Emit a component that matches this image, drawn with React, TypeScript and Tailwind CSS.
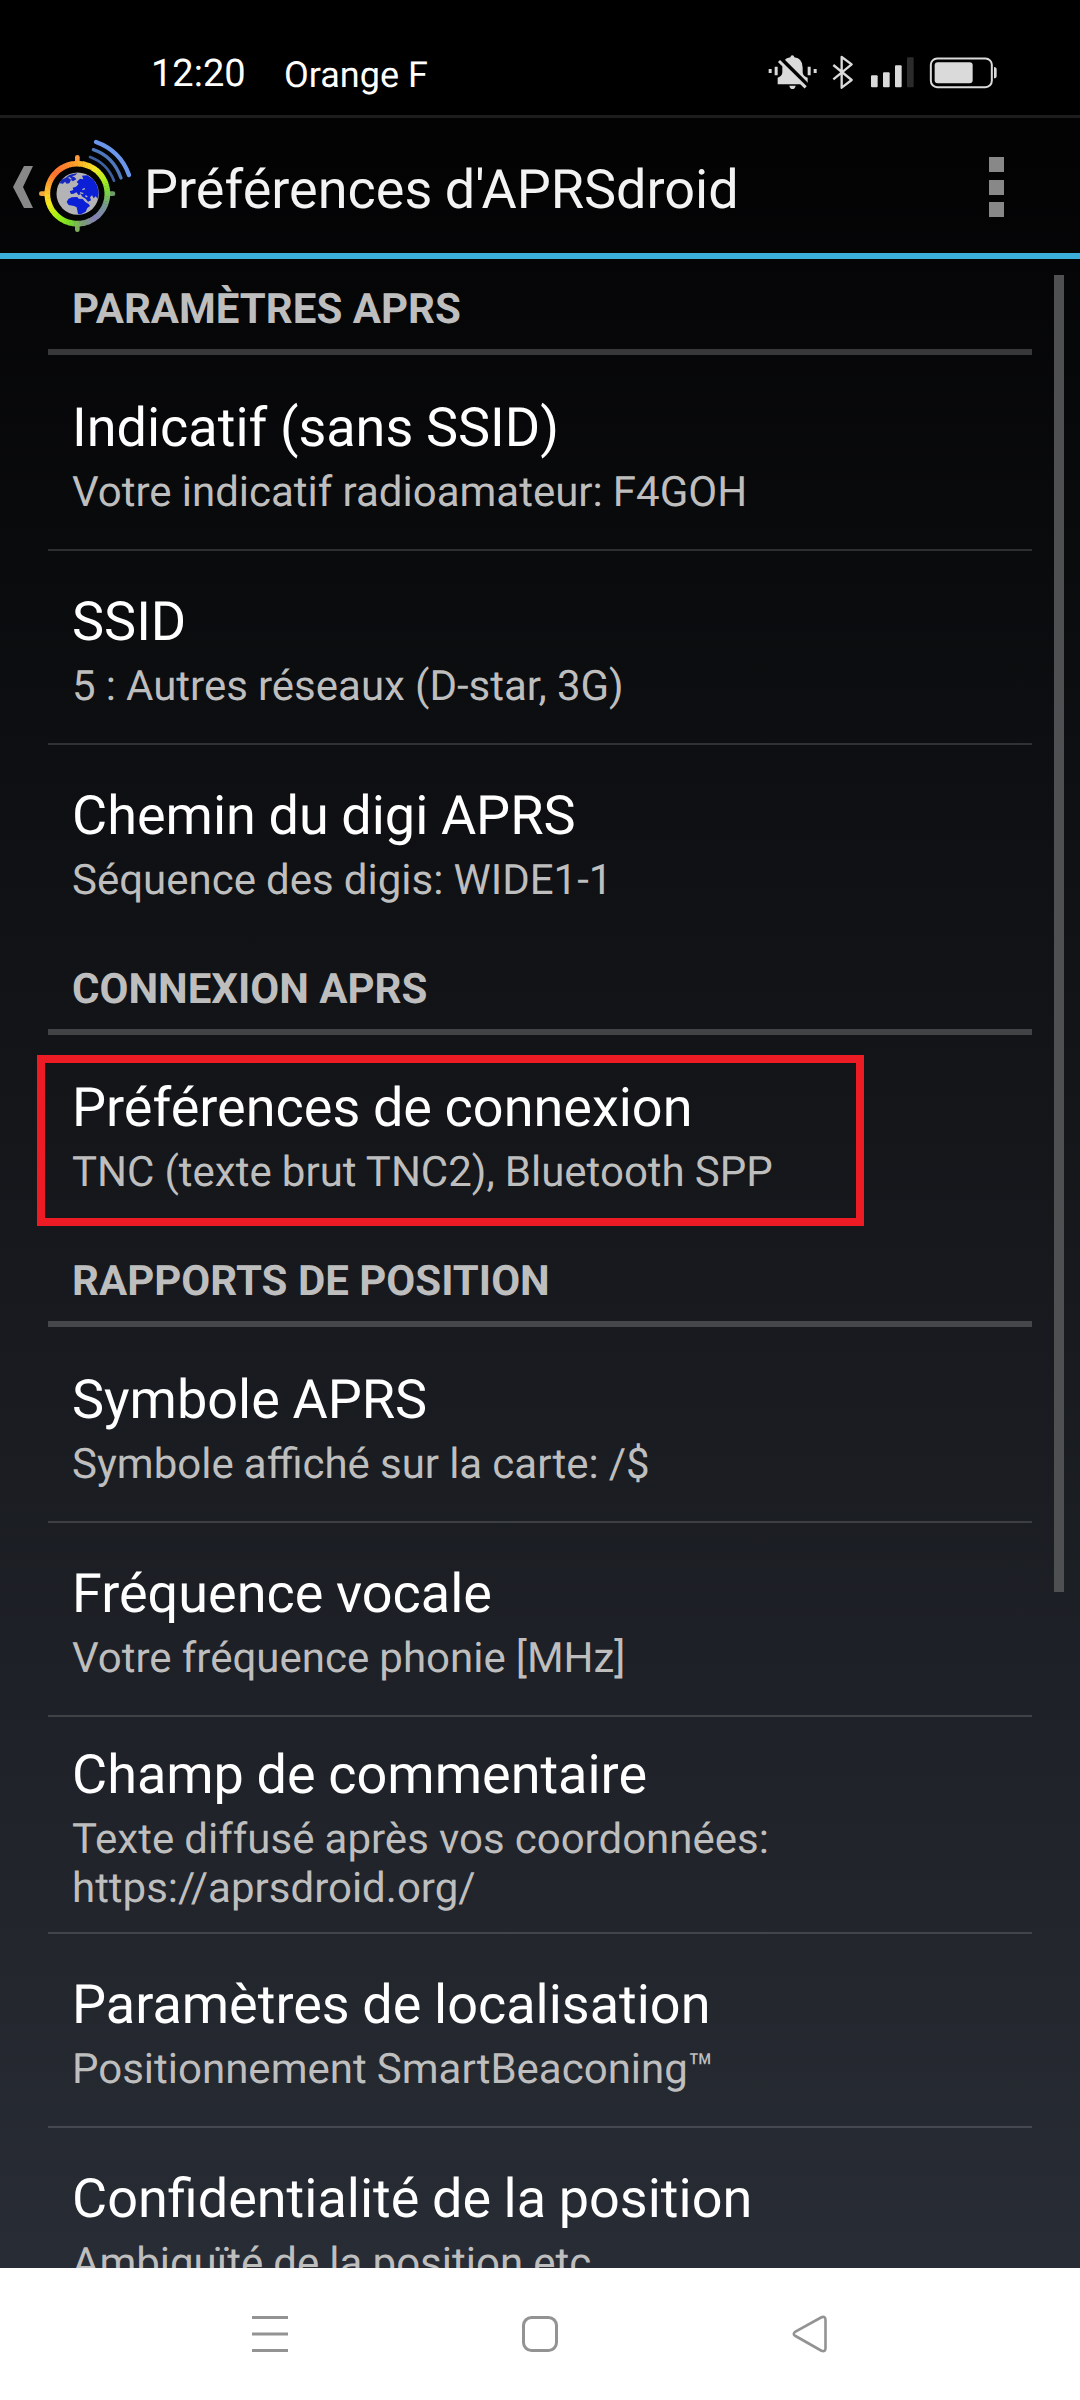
type Pref = { title: string; summary: string[]; highlighted?: boolean };
type Section = { heading: string; prefs: Pref[] };

const sections: Section[] = [
  {
    heading: "PARAMÈTRES APRS",
    prefs: [
      { title: "Indicatif (sans SSID)", summary: ["Votre indicatif radioamateur: F4GOH"] },
      { title: "SSID", summary: ["5 : Autres réseaux (D-star, 3G)"] },
      { title: "Chemin du digi APRS", summary: ["Séquence des digis: WIDE1-1"] },
    ],
  },
  {
    heading: "CONNEXION APRS",
    prefs: [
      {
        title: "Préférences de connexion",
        summary: ["TNC (texte brut TNC2), Bluetooth SPP"],
        highlighted: true,
      },
    ],
  },
  {
    heading: "RAPPORTS DE POSITION",
    prefs: [
      { title: "Symbole APRS", summary: ["Symbole affiché sur la carte: /$"] },
      { title: "Fréquence vocale", summary: ["Votre fréquence phonie [MHz]"] },
      {
        title: "Champ de commentaire",
        summary: ["Texte diffusé après vos coordonnées:", "https://aprsdroid.org/"],
      },
      { title: "Paramètres de localisation", summary: ["Positionnement SmartBeaconing™"] },
      { title: "Confidentialité de la position", summary: ["Ambiguïté de la position etc."] },
    ],
  },
];

// Ring colours by angle, clockwise from the top.
const ringStops: [number, number[]][] = [
  [0, [255, 170, 40]],
  [35, [245, 235, 40]],
  [65, [170, 240, 30]],
  [85, [120, 215, 60]],
  [115, [120, 150, 150]],
  [145, [135, 130, 185]],
  [170, [125, 160, 115]],
  [195, [120, 220, 40]],
  [220, [160, 245, 20]],
  [250, [245, 235, 30]],
  [275, [255, 190, 45]],
  [310, [255, 115, 50]],
  [335, [255, 130, 45]],
  [360, [255, 170, 40]],
];

function ringColor(angle: number) {
  const i = ringStops.findIndex(([a]) => a > angle);
  const [a0, c0] = ringStops[i - 1];
  const [a1, c1] = ringStops[i];
  const t = (angle - a0) / (a1 - a0);
  return `rgb(${c0.map((v, k) => Math.round(v + (c1[k] - v) * t)).join(",")})`;
}

function ringPoint(angle: number) {
  const r = (angle * Math.PI) / 180;
  return `${232 + 90 * Math.sin(r)} ${221 - 90 * Math.cos(r)}`;
}

function AppLogo() {
  return (
    <svg className="h-[100px] w-[100px]" viewBox="105 45 300 300" fill="none">
      <g strokeLinecap="round" strokeWidth="14">
        <path d="M232 128V112" stroke="#ff9a3c" />
        <path d="M139 221H124" stroke="#f2a640" />
        <path d="M325 221H339" stroke="#6c9c68" />
        <path d="M232 314V329" stroke="#7fae5c" />
      </g>
      {Array.from({ length: 72 }, (_, i) => (
        <path
          key={i}
          d={`M${ringPoint(i * 5)}A90 90 0 0 1 ${ringPoint(i * 5 + 5.8)}`}
          stroke={ringColor(i * 5 + 2)}
          strokeWidth="17"
        />
      ))}
      <circle cx="233" cy="221" r="63.5" fill="#b4b4b6" />
      <path
        d="M205 237L215 232 232 231 236 236 248 237 256 246 266 252 270 258 262 264 257 275 243 283 234 282 230 262 222 258 206 255 200 246Z"
        fill="#0a1fd6"
      />
      <path
        d="M213 222L209 214 220 210 218 203 228 200 236 192 230 186 240 176 250 178 246 167 262 166 281 179 292 198 296 218 293 236 287 229 281 235 276 226 270 232 273 241 264 245 257 236 247 230 242 222 236 226 229 217 221 221Z"
        fill="#0a1fd6"
      />
      <path
        d="M179 190L184 179 196 174 208 165 222 161 232 160 226 166 216 169 224 172 229 178 219 184 213 180 208 190 200 191 195 185 189 191Z"
        fill="#1626c0"
      />
      <path d="M240 218L250 221M247 209L255 206M214 178L206 172M256 227L262 231" stroke="#b4b4b6" strokeWidth="4" />
      <path d="M270 111Q321 129 342 182" stroke="#3d5f9e" strokeWidth="8" strokeLinecap="round" />
      <path d="M280 89Q339 108 363 174" stroke="#5078bd" strokeWidth="10" strokeLinecap="round" />
      <path d="M288 66Q361 92 387 165" stroke="#6a97ec" strokeWidth="13" strokeLinecap="round" />
    </svg>
  );
}

function StatusIcons() {
  return (
    <svg className="h-[40px] w-[240px]" viewBox="40 35 720 120" fill="#dadada">
      <path d="M57 86h9v12h-9zM75 79h9v26h-9zM174 79h9v26h-9zM192 86h9v12h-9z" />
      <path d="M84 132V112Q98 108 98 96V82Q98 54 122 51Q123 45 128 45Q133 45 134 51Q159 54 159 82V96Q159 108 174 112V132Z" />
      <path d="M119 136H138Q136 146 128.500 146Q121 146 119 136Z" />
      <path d="M86 48L182 144" stroke="#000" strokeWidth="13" />
      <path d="M88 62L168 141" stroke="#dadada" strokeWidth="9" />
      <path
        d="M251 74L306 119 276 142V50L306 72 251 117"
        fill="none"
        stroke="#dadada"
        strokeWidth="7"
        strokeLinejoin="round"
      />
      <rect x="364" y="105" width="20" height="36" rx="3" />
      <rect x="400" y="96" width="20" height="45" rx="3" />
      <rect x="436" y="75" width="20" height="66" rx="3" />
      <rect x="472" y="51" width="20" height="90" rx="3" fill="#2b2b2b" />
      <rect x="543.500" y="54.500" width="183" height="86" rx="19" fill="none" stroke="#dadada" strokeWidth="6" />
      <rect x="555" y="66" width="114" height="63" rx="9" />
      <path d="M733 80Q741 80 741 88V106Q741 114 733 114Z" />
    </svg>
  );
}

function PrefRow({ pref, last }: { pref: Pref; last: boolean }) {
  return (
    <div
      className={`relative flex shrink-0 flex-col justify-center border-b-2 px-6 pt-[7px] ${
        last ? "border-transparent" : "border-white/15"
      } ${pref.summary.length > 1 ? "h-[217px]" : "h-[194px]"}`}
    >
      <div className="mb-2 text-[54px] leading-[63px] text-white [word-spacing:-0.8px]">{pref.title}</div>
      {pref.summary.map((line) => (
        <div key={line} className="text-[42px] leading-[49px] text-[#bebebe] [word-spacing:-0.3px]">
          {line}
        </div>
      ))}
      {pref.highlighted && (
        <div className="absolute top-[18px] -left-[11px] h-[171px] w-[827px] border-8 border-[#ed1c24]" />
      )}
    </div>
  );
}

export default function App() {
  return (
    <div className="flex h-[2400px] w-[1080px] flex-col overflow-hidden bg-white font-['Roboto',sans-serif] whitespace-nowrap [text-rendering:geometricPrecision]">
      <div className="relative flex h-[2268px] shrink-0 flex-col overflow-hidden bg-[linear-gradient(#000000,#282c34)]">
        <div className="flex h-[118px] shrink-0 items-start border-b-[3px] border-[#1d1d1d] bg-black text-white">
          <div className="mt-[51px] ml-[151px] w-[133px] text-[38px] leading-[46px]">12:20</div>
          <div className="mt-[53px] text-[36px] leading-[44px]">Orange F</div>
          <div className="mt-[52px] mr-[77px] ml-auto">
            <StatusIcons />
          </div>
        </div>
        <header className="flex h-[141px] shrink-0 items-start border-b-[6px] border-[#3caedc]">
          <svg className="mt-12 ml-[13px] h-[42px] w-5" viewBox="0 0 20 42" fill="#888">
            <path d="M11 0H20L10 21L20 42H11L0 21Z" />
          </svg>
          <div className="mt-[17px] ml-0.5">
            <AppLogo />
          </div>
          <h1 className="mt-[41px] ml-[9px] text-[54px] leading-[63px] font-normal text-[#f3f3f3] [word-spacing:-1px]">
            Préférences d'APRSdroid
          </h1>
          <div className="mt-[39px] mr-[76px] ml-auto flex flex-col gap-[7.5px]">
            <span className="size-[15px] bg-[#888]" />
            <span className="size-[15px] bg-[#888]" />
            <span className="size-[15px] bg-[#888]" />
          </div>
        </header>
        <main className="flex flex-col px-12">
          {sections.map((section) => (
            <section key={section.heading} className="flex flex-col">
              <h2 className="mb-0.5 flex h-24 shrink-0 items-center border-b-[6px] border-white/20 px-6 pt-2.5 text-[42px] leading-[49px] font-bold text-[#bebebe]">
                {section.heading}
              </h2>
              {section.prefs.map((pref, i) => (
                <PrefRow key={pref.title} pref={pref} last={i === section.prefs.length - 1} />
              ))}
            </section>
          ))}
        </main>
        <div className="absolute top-[275px] left-[1054px] h-[1317px] w-2.5 bg-[#4f5051]" />
      </div>
      <nav className="flex h-[132px] shrink-0 items-center justify-between bg-white px-[250px]">
        <svg className="h-10 w-10" viewBox="0 0 40 40" stroke="#939393" strokeWidth="3">
          <path d="M2 3.500H38M2 20H38M2 36.500H38" />
        </svg>
        <svg className="h-10 w-10" viewBox="0 0 40 40" fill="none" stroke="#939393" strokeWidth="3">
          <rect x="3.500" y="3.500" width="33" height="33" rx="8" />
        </svg>
        <svg className="h-10 w-10" viewBox="0 0 40 40" fill="none" stroke="#939393" strokeWidth="2.600">
          <path d="M31 3.500Q35.500 1.500 35.500 6V34Q35.500 38.500 31 36.500L5.500 22Q2 20 5.500 17.500Z" />
        </svg>
      </nav>
    </div>
  );
}
